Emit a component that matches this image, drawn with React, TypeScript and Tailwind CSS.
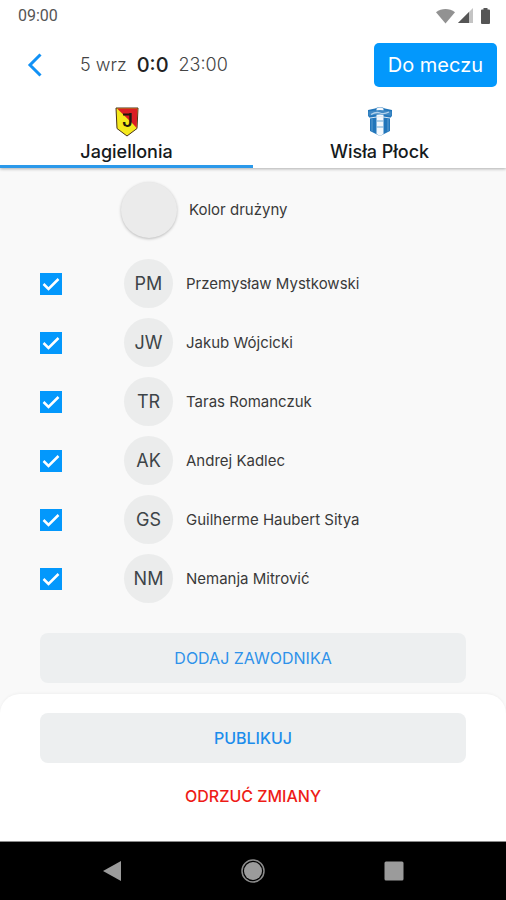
import { useState } from 'react';

type Player = {
  initials: string;
  name: string;
}

const players: Player[] = [
  { initials: 'PM', name: 'Przemysław Mystkowski' },
  { initials: 'JW', name: 'Jakub Wójcicki' },
  { initials: 'TR', name: 'Taras Romanczuk' },
  { initials: 'AK', name: 'Andrej Kadlec' },
  { initials: 'GS', name: 'Guilherme Haubert Sitya' },
  { initials: 'NM', name: 'Nemanja Mitrović' },
];

function StatusBar() {
  return (
    <div className="flex h-8 items-center justify-between pl-[18px] pr-4 font-['Roboto',sans-serif] text-base text-[#555]">
      <span>09:00</span>
      <div className="flex items-center">
        <svg width="19" height="16" viewBox="0 0 19 16" aria-hidden="true">
          <path d="M0 4.200C5.500-.2 13.500-.2 19 4.200L9.500 15.500z" fill="#929292" />
        </svg>
        <svg className="ml-[3px]" width="15" height="16" viewBox="0 0 15 16" aria-hidden="true">
          <path d="M15 0v15H0z" fill="#c4c4c4" />
          <path d="M11 4v11H0z" fill="#555" />
        </svg>
        <svg className="ml-2" width="9" height="16" viewBox="0 0 9 16" aria-hidden="true">
          <path d="M2.500 0h4v1.500H8a1 1 0 0 1 1 1V15a1 1 0 0 1-1 1H1a1 1 0 0 1-1-1V2.500a1 1 0 0 1 1-1h1.500z" fill="#555" />
        </svg>
      </div>
    </div>
  )
}

function Header() {
  return (
    <header className="flex h-[65px] items-center pl-6 pr-[9px]">
      <button type="button" aria-label="Wstecz" className="flex h-10 w-6 items-center">
        <svg width="20" height="26" viewBox="0 0 20 26" fill="none" aria-hidden="true">
          <path d="M16.500 2.500L6 13l10.500 10.500" stroke="#1191f5" strokeWidth="3" />
        </svg>
      </button>
      <div className="ml-8 flex items-center gap-2.5 text-lg font-light text-[#444]">
        <span>5 wrz</span>
        <span className="text-xl font-medium text-[#222]">0:0</span>
        <span>23:00</span>
      </div>
      <button type="button" className="ml-auto h-11 rounded-[5px] bg-[#0398fc] px-3.5 text-xl text-white">
        Do meczu
      </button>
    </header>
  )
}

function JagielloniaCrest() {
  return (
    <svg width="24" height="30" viewBox="0 0 24 30" aria-hidden="true">
      <path d="M1 1h22l-1 20.500L12 29 2 21.500z" fill="#f5e91c" stroke="#4a3316" />
      <path d="M2 1.500h20.500L21.700 21 18 17z" fill="#da1d24" />
      <path d="M8 7.500h8" stroke="#21180d" strokeWidth="2" />
      <text x="12.500" y="20" textAnchor="middle" fontSize="18" fontWeight="600" fill="#21180d">J</text>
    </svg>
  )
}

function WislaCrest() {
  return (
    <svg width="26" height="30" viewBox="0 0 26 30" aria-hidden="true">
      <path d="M1 3l7-1.500Q13-1 18 1.500L25 3v6l-2 2v13l-10 5-10-5V11L1 9z" fill="#2276bb" />
      <path d="M9.500 1.500q3.500-2 7 0V27L13 29l-3.500-2z" fill="#f4f8fc" />
      <path d="M5 12v12.500M21 12v12.500" stroke="#6ba7d6" strokeWidth=".8" />
      <path d="M1.500 4.500q11.500-3 23 0v4.500q-11.500-3-23 0z" fill="#3f88c4" />
      <path d="M4 7.500q5-3 9-1.500t9-1" stroke="#b5d3ec" strokeWidth="1.300" fill="none" />
      <path d="M3 11q10-3 20 0" stroke="#dbe9f5" fill="none" />
      <path d="M9.500 14h7M9.500 20h7" stroke="#6ba7d6" />
    </svg>
  )
}

function Tabs() {
  return (
    <nav role="tablist" className="grid grid-cols-2 text-lg leading-6 font-medium text-[#151a20]">
      <button type="button" role="tab" aria-selected="true" className="flex flex-col items-center border-b-3 border-[#2b99ea] pt-2.5 pb-px">
        <JagielloniaCrest />
        <span className="mt-[3px]">Jagiellonia</span>
      </button>
      <button type="button" role="tab" aria-selected="false" className="flex flex-col items-center border-b-3 border-white pt-2.5 pb-px">
        <WislaCrest />
        <span className="mt-[3px]">Wisła Płock</span>
      </button>
    </nav>
  )
}

function PlayerRow({ initials, name }: Player) {
  const [checked, setChecked] = useState(true);

  return (
    <li>
      <label className="flex items-center">
        <span className="grid size-[22px] place-items-center">
          <input
            type="checkbox"
            checked={checked}
            onChange={() => setChecked(!checked)}
            className="peer size-[22px] appearance-none border-2 border-[#0398fc] [grid-area:1/1] checked:bg-[#0398fc]"
          />
          <svg className="pointer-events-none hidden [grid-area:1/1] peer-checked:block" width="18" height="14" viewBox="0 0 18 14" fill="none" aria-hidden="true">
            <path d="M1.500 7l5 5L16.500 2" stroke="#fff" strokeWidth="2.500" />
          </svg>
        </span>
        <span className="ml-[62px] flex size-[49px] items-center justify-center rounded-full bg-[#ebecec] text-lg text-[#3d4448]">
          {initials}
        </span>
        <span className="ml-[13px] text-[15px] leading-6 text-[#3a3a3a]">{name}</span>
      </label>
    </li>
  )
}

export default function App() {
  return (
    <div className="flex min-h-screen flex-col bg-[#f9f9f9] font-['Inter','Liberation_Sans',sans-serif]">
      <div className="bg-white shadow-[0_1px_3px_rgba(0,0,0,0.3)]">
        <StatusBar />
        <Header />
        <Tabs />
      </div>

      <main className="flex-1 px-10 pb-2.5">
        <button type="button" className="mt-3.5 ml-[81px] flex items-center gap-3">
          <span className="size-14 rounded-full bg-[#ebebeb] shadow-[0_1px_3px_rgba(0,0,0,0.25)]" />
          <span className="text-[15px] text-[#3a3a3a]">Kolor drużyny</span>
        </button>

        <ul className="mt-[21px] flex flex-col gap-2.5">
          {players.map((player) => (
            <PlayerRow key={player.initials} {...player} />
          ))}
        </ul>

        <button type="button" className="mt-[30px] h-[50px] w-full rounded-lg bg-[#edeff0] text-base text-[#2f92ea]">
          DODAJ ZAWODNIKA
        </button>
      </main>

      <footer>
        <div className="flex flex-col items-center rounded-t-[20px] bg-white px-10 pt-[19px] pb-[21px] shadow-[0_-1px_3px_rgba(0,0,0,0.04)]">
          <button type="button" className="h-[50px] w-full rounded-lg bg-[#edeff0] text-base font-medium text-[#1c8dec]">
            PUBLIKUJ
          </button>
          <button type="button" className="mt-[9px] h-12 w-full text-base font-medium text-[#ee1c17]">
            ODRZUĆ ZMIANY
          </button>
        </div>
        <div className="flex h-[59px] items-center justify-around border-t border-[#8a8a8a] bg-black px-[42px]">
          <svg width="20" height="22" viewBox="0 0 20 22" aria-hidden="true">
            <path d="M19 1v20L1 11z" fill="#9b9b9b" />
          </svg>
          <svg width="24" height="24" viewBox="0 0 24 24" aria-hidden="true">
            <circle cx="12" cy="12" r="11" fill="none" stroke="#8b8b8b" strokeWidth="1.500" />
            <circle cx="12" cy="12" r="9" fill="#9b9b9b" />
          </svg>
          <svg width="20" height="20" viewBox="0 0 20 20" aria-hidden="true">
            <rect x=".5" y=".5" width="19" height="19" rx="1.500" fill="#9b9b9b" />
          </svg>
        </div>
      </footer>
    </div>
  )
}
